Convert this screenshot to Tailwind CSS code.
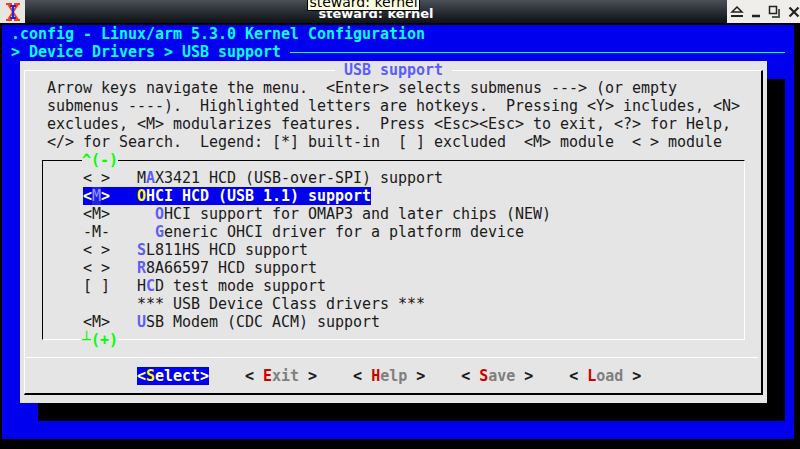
<!DOCTYPE html>
<html>
<head>
<meta charset="utf-8" />
<title>steward: kernel</title>
<script src="https://cdn.jsdelivr.net/npm/@tailwindcss/browser@4"></script>
</head>
<body class="bg-black w-[800px] h-[449px] overflow-hidden relative">

<!-- window title bar -->
<div class="h-[25px] flex items-stretch pb-[2px] bg-black">
	<div class="w-[25px] bg-[#e8e6e0] flex items-center justify-center">
		<svg width="20" height="20" viewBox="0 0 20 20">
			<path d="M3 2h6M11 2h6M3 18h6M11 18h6M5 2l10 16M15 2L5 18" stroke="#ff3b1f" stroke-width="2" fill="none"/>
			<path d="M7 4h6M10 4v12M7 16h6" stroke="#1030e0" stroke-width="2" fill="none"/>
		</svg>
	</div>
	<div class="flex-1 flex items-center justify-center bg-gradient-to-b from-[#4b5058] via-[#2a2f36] to-[#0f1317] font-['DejaVu_Sans'] font-bold text-[13px] text-white pt-[4px]">steward: kernel</div>
	<div class="w-[73px] bg-[#efeeea] flex items-center justify-center gap-[7px] pl-[2px]">
		<svg width="14" height="12" viewBox="0 0 14 12"><path d="M7 1L12 6H2Z" fill="none" stroke="#222" stroke-width="1.5"/><path d="M1 10h12" stroke="#222" stroke-width="2"/></svg>
		<svg width="10" height="12" viewBox="0 0 10 12"><path d="M1 10h8" stroke="#222" stroke-width="2.5"/></svg>
		<svg width="13" height="13" viewBox="0 0 13 13"><path d="M1.5 1.5h7v7h-7z" fill="none" stroke="#222" stroke-width="1.5"/><path d="M11 4v8H4" fill="none" stroke="#555" stroke-width="2"/></svg>
		<svg width="12" height="12" viewBox="0 0 12 12"><path d="M1.5 1.5l9 9M10.5 1.5l-9 9" stroke="#222" stroke-width="2.2"/></svg>
	</div>
</div>

<!-- tooltip over title -->
<div class="absolute left-[307px] top-[-8px] w-[113px] h-[19px] bg-[#ffffe1] border border-black flex items-center justify-center font-['DejaVu_Sans'] text-[14px] text-black leading-none whitespace-pre">steward: kernel</div>

<!-- terminal -->
<div class="ml-[2px] w-[792px] h-[414px] bg-[#0000ee] font-['DejaVu_Sans_Mono'] text-[15px] tracking-[-0.03px] leading-[18px] relative">
	<div class="h-[18px] whitespace-pre font-bold text-[#00ffff]"> .config - Linux/arm 5.3.0 Kernel Configuration</div>
	<div class="h-[18px] whitespace-pre font-bold text-[#00ffff] flex items-center"><span> &gt; Device Drivers &gt; USB support </span><span class="w-[495px] h-px bg-[#00ffff]"></span></div>

	<!-- shadow + dialog -->
	<div class="relative ml-[18px] w-[765px] h-[360px]">
		<div class="absolute left-[18px] top-[18px] w-[747px] h-[342px] bg-black"></div>
		<div class="relative w-[747px] h-[342px] bg-[#e5e5e5] pt-[9px] text-[#1a1a1a]">
			<div class="relative mx-[4px] w-[739px] h-[325px] border-t border-l border-white border-r-2 border-b-2 border-r-black border-b-black pt-[8px]">
				<div class="absolute left-[310px] top-[-10px] bg-[#e5e5e5] font-bold text-[#5c5cff] whitespace-pre"> USB support </div>
				<div class="pl-[22px]">
					<div class="h-[18px] whitespace-pre">Arrow keys navigate the menu.  &lt;Enter&gt; selects submenus ---&gt; (or empty</div>
					<div class="h-[18px] whitespace-pre">submenus ----).  Highlighted letters are hotkeys.  Pressing &lt;Y&gt; includes, &lt;N&gt;</div>
					<div class="h-[18px] whitespace-pre">excludes, &lt;M&gt; modularizes features.  Press &lt;Esc&gt;&lt;Esc&gt; to exit, &lt;?&gt; for Help,</div>
					<div class="h-[18px] whitespace-pre">&lt;/&gt; for Search.  Legend: [*] built-in  [ ] excluded  &lt;M&gt; module  &lt; &gt; module</div>
				</div>

				<!-- menu list -->
				<div class="relative ml-[17px] mt-[9px] w-[703px] h-[180px] border-t border-l border-t-black border-l-black border-r border-b border-r-white border-b-white pt-[8px] pl-[40px]">
					<div class="absolute left-[39px] top-[-10px] bg-[#e5e5e5] font-bold text-[#00ff00]">^(-)</div>
					<div class="h-[18px] whitespace-pre">&lt; &gt;   M<b class="text-[#5c5cff]">A</b>X3421 HCD (USB-over-SPI) support</div>
					<div class="h-[18px] w-[288px] whitespace-pre bg-[#0000ee] text-white font-bold flex"><span>&lt;</span><span class="bg-[#2020f0] text-[#9a9aff] font-normal">M</span><span>&gt;   </span><span class="text-[#ffff00]">O</span><span>HCI HCD (USB 1.1) support</span></div>
					<div class="h-[18px] whitespace-pre">&lt;M&gt;     <b class="text-[#5c5cff]">O</b>HCI support for OMAP3 and later chips (NEW)</div>
					<div class="h-[18px] whitespace-pre">-M-     <b class="text-[#5c5cff]">G</b>eneric OHCI driver for a platform device</div>
					<div class="h-[18px] whitespace-pre">&lt; &gt;   <b class="text-[#5c5cff]">S</b>L811HS HCD support</div>
					<div class="h-[18px] whitespace-pre">&lt; &gt;   <b class="text-[#5c5cff]">R</b>8A66597 HCD support</div>
					<div class="h-[18px] whitespace-pre">[ ]   H<b class="text-[#5c5cff]">C</b>D test mode support</div>
					<div class="h-[18px] whitespace-pre">      *** USB Device Class drivers ***</div>
					<div class="h-[18px] whitespace-pre">&lt;M&gt;   <b class="text-[#5c5cff]">U</b>SB Modem (CDC ACM) support</div>
					<div class="absolute left-[39px] top-[170px] flex h-[18px]"><span class="text-[#00ff00] bg-[#e5e5e5]">┴</span><b class="text-[#00ff00] bg-[#e5e5e5]">(+)</b></div>
				</div>

				<!-- divider and buttons -->
				<div class="mt-[17px] h-px w-[733px] bg-white"></div>
				<div class="mt-[9px] pl-[112px] flex h-[18px] whitespace-pre font-bold text-[#1a1a1a]">
					<span class="bg-[#0000ee] text-white">&lt;<span class="text-[#ffff00]">S</span>elect&gt;</span>
					<span class="ml-[36px]">&lt; <span class="text-[#cd0000]">E</span><span class="text-[#7f7f7f]">xit</span> &gt;</span>
					<span class="ml-[36px]">&lt; <span class="text-[#cd0000]">H</span><span class="text-[#7f7f7f]">elp</span> &gt;</span>
					<span class="ml-[36px]">&lt; <span class="text-[#cd0000]">S</span><span class="text-[#7f7f7f]">ave</span> &gt;</span>
					<span class="ml-[36px]">&lt; <span class="text-[#cd0000]">L</span><span class="text-[#7f7f7f]">oad</span> &gt;</span>
				</div>
			</div>
		</div>
	</div>
</div>
</body>
</html>
